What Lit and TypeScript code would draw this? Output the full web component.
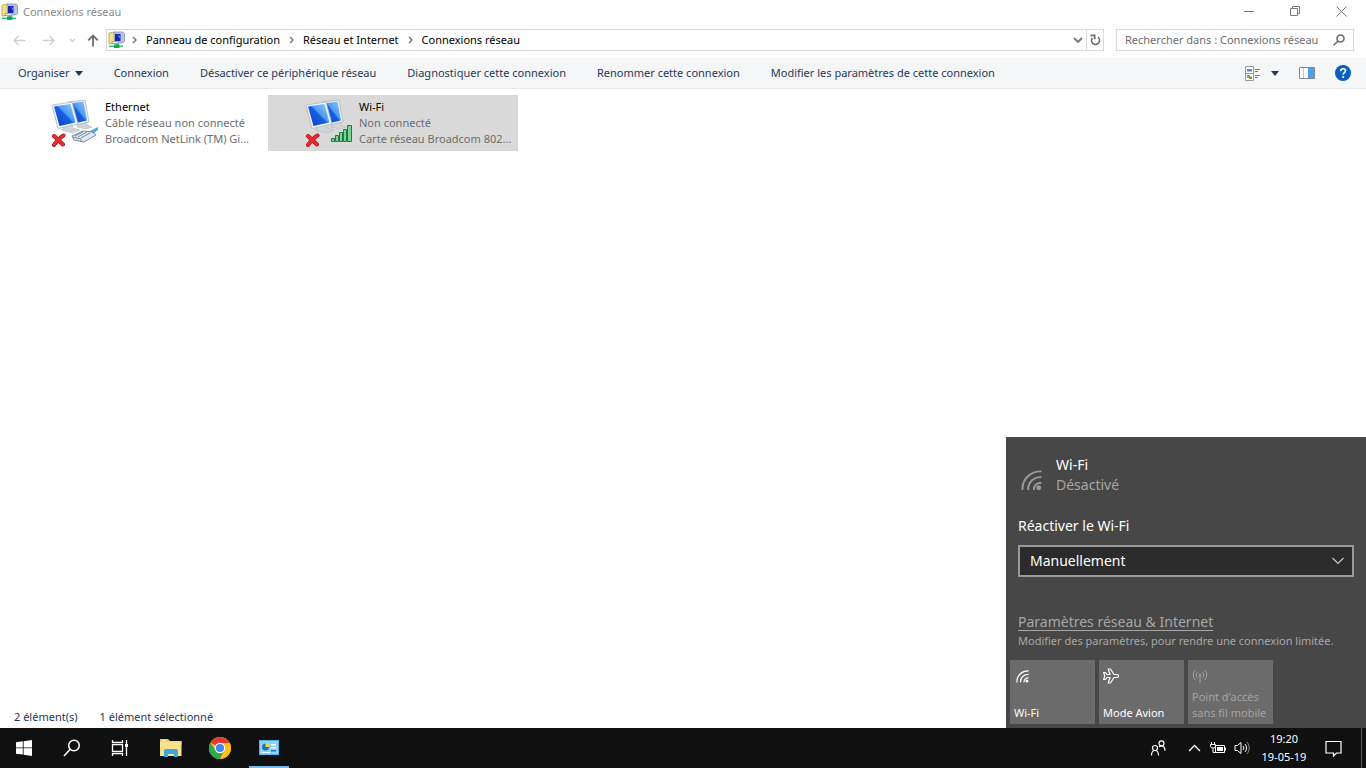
import { LitElement, html, css, svg } from "lit";
import { customElement, state } from "lit/decorators.js";
import { classMap } from "lit/directives/class-map.js";

const networkIcon = html`<svg width="18" height="18" viewBox="0 0 18 18" aria-hidden="true">
  <path d="M1 2l6-1v11l-6 1z" fill="#f3e27a" stroke="#b5a650" stroke-width=".8"/>
  <path d="M6 1h9l1.500 1.500v8L14 12H6.500z" fill="#b9c4dc" stroke="#7f89a8" stroke-width=".7"/>
  <path d="M7 3h5.500v7H7z" fill="#1526b8"/>
  <path d="M9.500 4l2.500 1v2.500z" fill="#6c86ee"/>
  <path d="M4 10.500h6l1 2H4z" fill="#e8ecf4" stroke="#7a86a0" stroke-width=".6"/>
  <path d="M7.500 12.500h3v2H15V16H1v-1.500h6.500z" fill="#35c878"/>
  <path d="M6 13.500h5.500V17H6z" fill="#18a557"/>
</svg>`;

const monitors = svg`
  <defs><linearGradient id="scr" x1="0" y1="1" x2="1" y2="0">
    <stop offset="0" stop-color="#0a3fc0"/><stop offset=".5" stop-color="#1560e0"/><stop offset=".56" stop-color="#4c9bf5"/><stop offset="1" stop-color="#9ccdfc"/>
  </linearGradient></defs>
  <path d="M28 24l7-1 1 3 5 2-6 2-9-2z" fill="#d0d5da" stroke="#b4bac1" stroke-width=".6"/>
  <path d="M17 3l17-2 4 22-13 3z" fill="#eef1f5" stroke="#aeb6bf" stroke-width=".8"/>
  <path d="M19 4.500l13.500-2 3.500 19-11 2.500z" fill="url(#scr)"/>
  <path d="M11 28l10-2 1 3 7 2-7 3-12-3 3-2z" fill="#d0d5da" stroke="#b4bac1" stroke-width=".6"/>
  <path d="M1 6l20-3 6 22-20 4.500z" fill="#f3f6f9" stroke="#aeb6bf" stroke-width=".8"/>
  <path d="M3 7.500l16.500-2.500 5 18.500-16 3.500z" fill="url(#scr)"/>`;

const redCross = svg`
  <path d="M3 37l9 8.500M12.500 36.500C9 38.500 6 42 3 46" fill="none" stroke="#9e1016" stroke-width="4" stroke-linecap="round"/>
  <path d="M3 37l9 8.500M12.500 36.500C9 38.500 6 42 3 46" fill="none" stroke="#ec2b2f" stroke-width="2.800" stroke-linecap="round"/>`;

const cable = svg`
  <path d="M35 34l12-6v3l-7 5z" fill="#41aee0"/>
  <path d="M21 37l11-5 9 1 4 3-12 7-10-2z" fill="#dfe9f2" stroke="#6f8194" stroke-width=".9"/>
  <path d="M24 37l8-4m-5 5l9-5m-6 6l9-5m-17 4l8 2v3" fill="none" stroke="#6f8194" stroke-width=".9"/>`;

const bars = svg`
  <g fill="#7fd097" stroke="#1c7c40" stroke-width="1">
    <path d="M26.500 39.500h3v3h-3zM30.500 36.500h3v6h-3zM34.500 33.500h3v9h-3zM38.500 30.500h3v12h-3zM42.500 26.500h4v16h-4z"/>
  </g>`;

const wifi = (size: number) => html`<svg width=${size} height=${size} viewBox="0 0 22 22" fill="none" stroke="currentColor" stroke-width="2" aria-hidden="true">
  <circle cx="18.500" cy="18.500" r="2.600" fill="currentColor" stroke="none"/>
  <path d="M13.500 21c-.5-4.500 3-8 8-7.500M7.500 21c-.5-8 6-14 14-13.500M1.500 21C1 9.500 10 1 21.500 1.500"/>
</svg>`;

@customElement("connection-item")
export class ConnectionItem extends LitElement {
  static properties = {
    name: {}, status: {}, device: {}, kind: {}, selected: { type: Boolean },
  };
  declare name: string;
  declare status: string;
  declare device: string;
  declare kind: string;
  declare selected: boolean;

  static styles = css`
    :host { display: block; }
    .item {
      display: flex; width: 100%; height: 56px; padding: 4px 5px 0 37px; gap: 6px; border: 0;
      background: transparent; font: inherit; text-align: left; color: #6d6d6d; box-sizing: border-box;
    }
    .selected { background: #d9d9d9; }
    .icon { flex: none; }
    .text { min-width: 0; display: block; }
    .line { display: block; line-height: 16px; white-space: nowrap; }
    .name { color: #000; }
  `;

  render() {
    return html`<button class=${classMap({ item: true, selected: this.selected })} aria-pressed=${this.selected ? "true" : "false"}>
      <svg class="icon" width="48" height="48" viewBox="0 0 48 48" aria-hidden="true">
        ${monitors}${redCross}${this.kind === "wifi" ? bars : cable}
      </svg>
      <span class="text">
        <span class="line name">${this.name}</span>
        <span class="line">${this.status}</span>
        <span class="line">${this.device}</span>
      </span>
    </button>`;
  }
}

@customElement("network-flyout")
export class NetworkFlyout extends LitElement {
  static styles = css`
    :host { display: block; background: #474747; color: #fff; font-size: 14px; }
    .head { display: flex; gap: 14px; padding: 18px 15px 0; line-height: 20px; }
    .signal { color: #9b9b9b; padding-top: 15px; height: 22px; }
    .signal svg, .tile svg { display: block; }
    .off { color: #a6a6a6; }
    .label { display: block; margin: 20px 12px 0; line-height: 22px; }
    .field { display: grid; margin: 8px 12px 0; }
    .select {
      grid-area: 1 / 1; appearance: none; height: 32px; border: 2px solid #999; border-radius: 0;
      background: #2b2b2b; color: #fff; font: inherit; padding: 0 10px; width: 100%;
    }
    .chevron { grid-area: 1 / 1; justify-self: end; align-self: center; margin-right: 9px; pointer-events: none; }
    .links { padding: 35px 12px 0; color: #a6a6a6; }
    .link { display: inline-block; color: #a6a6a6; line-height: 20px; text-underline-offset: 3px; }
    .hint { margin: 0; font-size: 11px; line-height: 18px; white-space: nowrap; }
    .tiles { display: grid; grid-template-columns: repeat(3, 85px); gap: 4px; padding: 10px 4px 4px; }
    .tile {
      display: flex; flex-direction: column; justify-content: space-between; align-items: flex-start;
      height: 64px; padding: 8px 4px 3px; border: 0; background: #6b6b6b; color: #fff;
      font: inherit; font-size: 11px; line-height: 16px; text-align: left; white-space: nowrap;
    }
    .tile:disabled { color: #a3a3a3; }
    .glyph { display: grid; place-items: center; width: 16px; height: 16px; }
  `;

  render() {
    return html`
      <div class="head">
        <span class="signal">${wifi(21)}</span>
        <div><div>Wi-Fi</div><div class="off">Désactivé</div></div>
      </div>
      <label class="label" for="again">Réactiver le Wi-Fi</label>
      <div class="field">
        <select class="select" id="again"><option>Manuellement</option></select>
        <svg class="chevron" width="14" height="8" viewBox="0 0 14 8" fill="none" stroke="#c8c8c8" stroke-width="1.2" aria-hidden="true"><path d="M1.500 1l5.500 5.500L12.500 1"/></svg>
      </div>
      <div class="links">
        <a class="link" href="#">Paramètres réseau &amp; Internet</a>
        <p class="hint">Modifier des paramètres, pour rendre une connexion limitée.</p>
      </div>
      <div class="tiles">
        <button class="tile"><span class="glyph">${wifi(13)}</span><span>Wi-Fi</span></button>
        <button class="tile">
          <span class="glyph"><svg width="16" height="16" viewBox="0 0 16 16" fill="none" stroke="currentColor" stroke-width="1.2" aria-hidden="true"><path d="M.700 4.500h1.800L4 6.500h3L5.300 1H7.500l3.500 5.500h3a1.500 1.500 0 0 1 0 3h-3L7.500 15H5.300L7 9.500H4l-1.500 2H.700l1-3.500z"/></svg></span>
          <span>Mode Avion</span>
        </button>
        <button class="tile" disabled>
          <span class="glyph"><svg width="16" height="14" viewBox="0 0 16 14" fill="none" stroke="currentColor" aria-hidden="true"><circle cx="8" cy="6" r="1"/><path d="M8 7v7M5.500 3a4 4 0 0 0 0 6M3.300 1a7 7 0 0 0 0 10M10.500 3a4 4 0 0 1 0 6M12.700 1a7 7 0 0 1 0 10"/></svg></span>
          <span>Point d'accès<br>sans fil mobile</span>
        </button>
      </div>`;
  }
}

@customElement("task-bar")
export class TaskBar extends LitElement {
  static styles = css`
    :host { display: flex; height: 40px; background: #101010; color: #fff; }
    .apps { display: flex; flex: 1; }
    .pinned { display: flex; gap: 9px; padding-left: 7px; }
    .app, .tray, .notify { border: 0; padding: 0; background: transparent; color: inherit; display: grid; place-items: center; }
    .app { width: 48px; }
    .pinned .app { width: 40px; }
    .active { box-shadow: inset 0 -2px #76b9ed; }
    .right { display: flex; }
    .tray { width: 24px; }
    .people { margin-right: 12px; }
    .clock { text-align: center; line-height: 18px; padding: 2px 0 0; width: 60px; }
    .notify { width: 38px; }
    .desktop { width: 5px; border: 0; padding: 0; margin-left: 9px; border-left: 1px solid #5a5a5a; background: transparent; }
  `;

  render() {
    return html`
      <div class="apps">
        <button class="app" aria-label="Démarrer"><svg width="16" height="16" viewBox="0 0 16 16" fill="#fff"><path d="M0 2.300L6.800 1.300V7.500H0zM7.600 1.200L16 0v7.500H7.600zM0 8.300h6.800v6.300L0 13.700zM7.600 8.300H16V16l-8.400-1.200z"/></svg></button>
        <button class="app" aria-label="Rechercher"><svg width="18" height="18" viewBox="0 0 18 18" fill="none" stroke="#fff" stroke-width="1.500"><circle cx="11" cy="6.500" r="5.300"/><path d="M7.200 10.300L1 17"/></svg></button>
        <button class="app" aria-label="Affichage des tâches"><svg width="18" height="18" viewBox="0 0 18 18" fill="none" stroke="#fff" stroke-width="1.300"><path d="M1.500 1v2.500h10V1M1.500 17v-2.500h10V17M1.500 5.700h10v6.600h-10zM15.500 1v16"/><path d="M14 5h3v3h-3z" fill="#fff" stroke="none"/></svg></button>
        <div class="pinned">
          <button class="app" aria-label="Explorateur de fichiers"><svg width="22" height="20" viewBox="0 0 22 20"><path d="M0 1h8l2 2h11.500v4H0z" fill="#f0c866"/><path d="M0 3.500h21.500V18H0z" fill="#fbe08d"/><path d="M2 2h4v1H2z" fill="#fff4c8"/><path d="M4 19v-6a2 2 0 0 1 2-2h10a2 2 0 0 1 2 2v6h-4v-3H8v3z" fill="#3fa9dc"/></svg></button>
          <button class="app" aria-label="Google Chrome"><svg width="22" height="22" viewBox="0 0 22 22"><circle cx="11" cy="11" r="11" fill="#fbc116"/><path d="M11 11L1.470 5.500A11 11 0 0 1 20.530 5.500z" fill="#e33b2e"/><path d="M1.470 5.500A11 11 0 0 0 11 22L15.300 13.500 11 11 6.700 13.500z" fill="#2da94f"/><path d="M11 6h9.800A11 11 0 0 1 11 22l4.300-8.500z" fill="#fbc116"/><circle cx="11" cy="11" r="5.200" fill="#fff"/><circle cx="11" cy="11" r="4.100" fill="#4285f4"/></svg></button>
          <button class="app active" aria-label="Panneau de configuration"><svg width="20" height="16" viewBox="0 0 20 16"><path d="M0 0h20v15H0z" fill="#4db4ea"/><path d="M1 1h18v13H1z" fill="#8fd3f6"/><circle cx="6.500" cy="7" r="3.500" fill="#1b75bb"/><path d="M6.500 7V3A4 4 0 0 1 10.500 7z" fill="#fbd24a"/><path d="M12 4h5v1.500h-5zM12 7h5v1.500h-5zM3 12h8v1H3z" fill="#fff"/><path d="M12 10h5v1.500h-5z" fill="#1b75bb"/></svg></button>
        </div>
      </div>
      <div class="right">
        <button class="tray people" aria-label="Contacts"><svg width="16" height="16" viewBox="0 0 16 16" fill="none" stroke="#fff" stroke-width="1.200"><circle cx="5" cy="8" r="2.500"/><path d="M1.500 15.500c0-3.500 1-5 3.500-5s3.500 1.500 3.500 5"/><circle cx="11.500" cy="3.300" r="2.500"/><path d="M9 6.800c.7-.8 1.500-1 2.500-1 2.500 0 3.500 2 3.500 5"/></svg></button>
        <button class="tray" aria-label="Icônes cachées"><svg width="13" height="8" viewBox="0 0 13 8" fill="none" stroke="#fff" stroke-width="1.300"><path d="M1 7l5.500-5.500L12 7"/></svg></button>
        <button class="tray" aria-label="Batterie"><svg width="16" height="13" viewBox="0 0 16 13" fill="none" stroke="#fff"><path d="M5.500 3.500h9v7h-9zM15.500 5.500v3M1.500 0v2M4.500 0v2M.500 2.500h5V4c0 1.500-1 2-2.500 2S.500 5.500.500 4zM3 6v4.500h3"/><path d="M7 5h6v4H7z" fill="#fff" stroke="none"/></svg></button>
        <button class="tray" aria-label="Volume"><svg width="17" height="14" viewBox="0 0 17 14" fill="none" stroke="#fff"><path d="M1 4.500h2.500L7 1.500v11l-3.500-3H1zM9 5a3 3 0 0 1 0 4M11 3a6 6 0 0 1 0 8"/><path d="M13 1a9 9 0 0 1 0 12" opacity=".5"/></svg></button>
        <div class="clock"><div>19:20</div><div>19-05-19</div></div>
        <button class="notify" aria-label="Notifications"><svg width="17" height="17" viewBox="0 0 17 17" fill="none" stroke="#fff" stroke-width="1.200"><path d="M1 1.500h15V13h-4.500L8.500 16v-3H1z"/></svg></button>
        <button class="desktop" aria-label="Afficher le Bureau"></button>
      </div>`;
  }
}

@customElement("app-root")
export class AppRoot extends LitElement {
  @state() private connections = [
    { name: "Ethernet", status: "Câble réseau non connecté", device: "Broadcom NetLink (TM) Gi...", kind: "cable", selected: false },
    { name: "Wi-Fi", status: "Non connecté", device: "Carte réseau Broadcom 802...", kind: "wifi", selected: true },
  ];

  private commands = [
    "Connexion", "Désactiver ce périphérique réseau", "Diagnostiquer cette connexion",
    "Renommer cette connexion", "Modifier les paramètres de cette connexion",
  ];

  static styles = css`
    :host {
      display: flex; flex-direction: column; position: relative; height: 100vh; overflow: hidden;
      background: #fff; color: #000; font: 11px/16px "Noto Sans", "Open Sans", sans-serif;
    }
    svg { display: block; flex: none; }
    button, input { font: inherit; }
    .title { display: flex; align-items: center; height: 23px; padding: 0 2px 0 1px; gap: 4px; color: #8a8a8a; }
    .caption { flex: 1; }
    .window { display: flex; align-items: center; }
    .win { width: 46px; height: 20px; border: 0; padding: 0; background: transparent; display: grid; place-items: center; }
    .nav { display: flex; align-items: center; height: 35px; padding: 0 12px 1px 13px; box-sizing: border-box; }
    .arrows { display: flex; align-items: center; width: 93px; }
    .arrow { border: 0; padding: 0; background: transparent; }
    .arrow.back { margin-right: 16px; }
    .arrow.recent { margin: 0 11px 0 14px; }
    .address { display: flex; flex: 1; align-items: center; height: 22px; box-sizing: border-box; border: 1px solid #d9d9d9; padding-left: 1px; }
    .crumbs { display: flex; flex: 1; align-items: center; margin-left: 6px; gap: 9px; }
    .crumb { color: #000; text-decoration: none; }
    .small { border: 0; padding: 0; background: transparent; height: 20px; width: 17px; display: grid; place-items: center; }
    .refresh { border-left: 1px solid #d9d9d9; }
    .search { display: flex; align-items: center; height: 22px; box-sizing: border-box; width: 238px; margin-left: 12px; border: 1px solid #d9d9d9; padding: 0 8px; }
    .query { flex: 1; min-width: 0; border: 0; padding: 0; outline: 0; background: transparent; }
    .query::placeholder { color: #6d6d6d; opacity: 1; }
    .tools { display: flex; align-items: center; height: 30px; padding: 0 15px 0 18px; background: #f5f6f7; border-bottom: 1px solid #e6e8ea; }
    .commands { display: flex; flex: 1; gap: 31px; }
    .command { display: flex; align-items: center; gap: 5px; border: 0; padding: 0; background: transparent; color: #1e395b; white-space: nowrap; }
    .views { display: flex; align-items: center; gap: 20px; }
    .view { border: 0; padding: 0; background: transparent; }
    .pair { display: flex; align-items: center; gap: 10px; }
    .list { flex: 1; display: grid; grid-template-columns: repeat(auto-fill, 250px); align-content: start; gap: 4px; padding: 6px 14px; }
    .status { display: flex; gap: 22px; padding: 0 14px; line-height: 22px; color: #1e395b; }
    .flyout { position: absolute; right: 0; bottom: 40px; width: 360px; }
  `;

  private sep = () => html`<svg width="5" height="8" viewBox="0 0 5 8" fill="none" stroke="#6d6d6d" stroke-width="1.300" aria-hidden="true"><path d="M1 1l3 3-3 3"/></svg>`;

  render() {
    return html`
      <header class="title">
        ${networkIcon}<span class="caption">Connexions réseau</span>
        <div class="window">
          <button class="win" aria-label="Réduire"><svg width="11" height="11" viewBox="0 0 11 11" stroke="#777"><path d="M0 5.500h10"/></svg></button>
          <button class="win" aria-label="Restaurer"><svg width="11" height="11" viewBox="0 0 11 11" fill="none" stroke="#777"><path d="M.500 2.500h7v7h-7zM2.500 2.500v-2h7v7h-2"/></svg></button>
          <button class="win" aria-label="Fermer"><svg width="11" height="11" viewBox="0 0 11 11" stroke="#777"><path d="M.500.500l10 10M10.500.500l-10 10"/></svg></button>
        </div>
      </header>
      <div class="nav">
        <div class="arrows">
          <button class="arrow back" aria-label="Précédent" disabled><svg width="13" height="11" viewBox="0 0 13 11" fill="none" stroke="#cfcfcf" stroke-width="1.300"><path d="M12.500 5.500H1M5.500 1L1 5.500 5.500 10"/></svg></button>
          <button class="arrow" aria-label="Suivant" disabled><svg width="13" height="11" viewBox="0 0 13 11" fill="none" stroke="#cfcfcf" stroke-width="1.300"><path d="M.500 5.500H12M7.500 1L12 5.500 7.500 10"/></svg></button>
          <button class="arrow recent" aria-label="Emplacements récents"><svg width="7" height="5" viewBox="0 0 7 5" fill="none" stroke="#cfcfcf" stroke-width="1.300"><path d="M1 1l2.500 2.500L6 1"/></svg></button>
          <button class="arrow" aria-label="Dossier parent"><svg width="12" height="13" viewBox="0 0 12 13" fill="none" stroke="#6a6a6a" stroke-width="1.800"><path d="M6 12.500V1.500M1.200 6.300L6 1.500l4.800 4.800"/></svg></button>
        </div>
        <div class="address">
          ${networkIcon}
          <nav class="crumbs">
            ${this.sep()}<a class="crumb" href="#">Panneau de configuration</a>
            ${this.sep()}<a class="crumb" href="#">Réseau et Internet</a>
            ${this.sep()}<a class="crumb" href="#">Connexions réseau</a>
          </nav>
          <button class="small" aria-label="Historique"><svg width="10" height="7" viewBox="0 0 10 7" fill="none" stroke="#777" stroke-width="1.900"><path d="M1 1l4 4 4-4"/></svg></button>
          <button class="small refresh" aria-label="Actualiser"><svg width="11" height="12" viewBox="0 0 11 12" fill="none" stroke="#6d6d6d" stroke-width="1.700"><path d="M8 3.200A4 4 0 1 1 2.300 4"/><path d="M.500 1.300h4.200v4"/></svg></button>
        </div>
        <label class="search">
          <input class="query" type="search" aria-label="Rechercher" placeholder="Rechercher dans : Connexions réseau">
          <svg width="12" height="12" viewBox="0 0 12 12" fill="none" stroke="#6a6a6a" stroke-width="1.600" aria-hidden="true"><circle cx="7.500" cy="4.500" r="3.500"/><path d="M5 7L.700 11.300"/></svg>
        </label>
      </div>
      <div class="tools">
        <div class="commands">
          <button class="command">Organiser<svg width="8" height="5" viewBox="0 0 8 5" fill="#1e395b" aria-hidden="true"><path d="M0 0h8L4 5z"/></svg></button>
          ${this.commands.map((c) => html`<button class="command">${c}</button>`)}
        </div>
        <div class="views">
          <button class="view pair" aria-label="Affichage">
            <svg width="16" height="15" viewBox="0 0 16 15"><path d="M.500.500h8v14h-8zM.500 7.500h8" fill="#fff" stroke="#9a9a9a"/><path d="M2 3h5v2.500H2z" fill="#4c8fd6"/><path d="M2 9h3v3H2z" fill="#d9822b"/><path d="M4 10.500h3V13H4z" fill="#4aa84a"/><path d="M10 3.500h5M10 5.500h3M10 9.500h5M10 11.500h3" stroke="#7a7a7a"/></svg>
            <svg width="8" height="5" viewBox="0 0 8 5" fill="#1e395b"><path d="M0 0h8L4 5z"/></svg>
          </button>
          <button class="view" aria-label="Volet de visualisation"><svg width="16" height="12" viewBox="0 0 16 12"><path d="M.500.500h15v11H.500z" fill="#fff" stroke="#7d8894"/><path d="M9 1h6v10H9z" fill="#4aa3e8"/><path d="M4.500 1v10" stroke="#b5c6d6"/></svg></button>
          <button class="view" aria-label="Aide"><svg width="16" height="16" viewBox="0 0 16 16"><circle cx="8" cy="8" r="8" fill="#0a5fc0"/><path d="M5.700 6.200C5.700 4.500 6.700 3.700 8.100 3.700s2.400.8 2.400 2.100c0 1.800-2.300 1.900-2.300 3.900" fill="none" stroke="#fff" stroke-width="1.600"/><circle cx="8.200" cy="12" r="1.100" fill="#fff"/></svg></button>
        </div>
      </div>
      <main class="list">
        ${this.connections.map((c) => html`<connection-item .name=${c.name} .status=${c.status} .device=${c.device} .kind=${c.kind} .selected=${c.selected}></connection-item>`)}
      </main>
      <footer class="status"><span>2 élément(s)</span><span>1 élément sélectionné</span></footer>
      <task-bar></task-bar>
      <network-flyout class="flyout"></network-flyout>`;
  }
}
